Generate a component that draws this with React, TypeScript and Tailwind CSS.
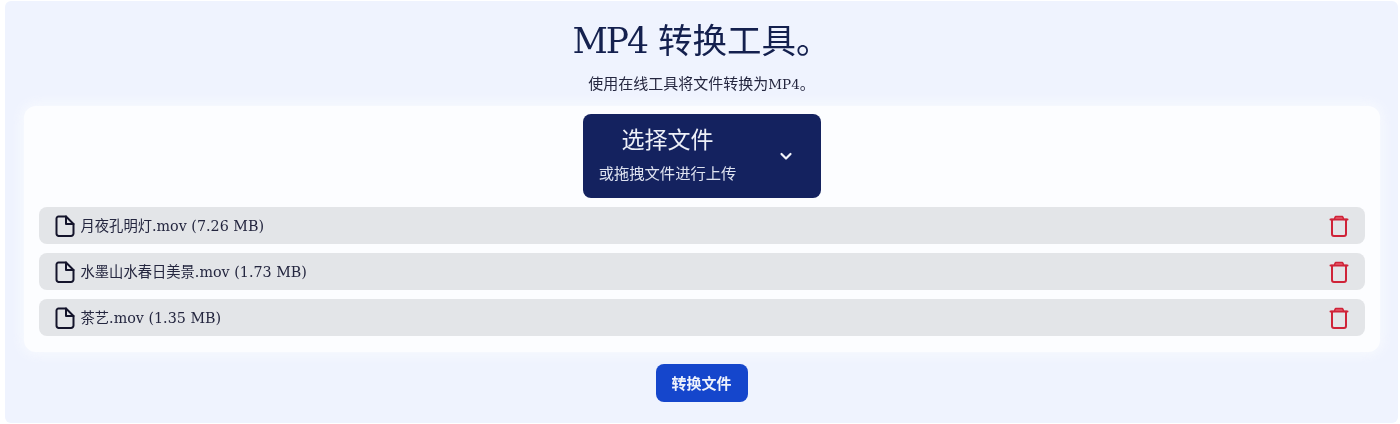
import React from "react";

const files = [
  { name: "月夜孔明灯.mov (7.26 MB)" },
  { name: "水墨山水春日美景.mov (1.73 MB)" },
  { name: "茶艺.mov (1.35 MB)" },
];

function FileIcon() {
  return (
    <svg width="20" height="22" viewBox="0 0 20 22" fill="none" stroke="#14142b" strokeWidth="2" strokeLinejoin="round" strokeLinecap="round" className="shrink-0">
      <path d="M3.5 1.5h7.5l7.5 7.5v9.5a2.5 2.5 0 0 1-2.5 2.5H3.5A2.5 2.5 0 0 1 1.5 18.5V3.5a2 2 0 0 1 2-2Z" />
      <path d="M11 1.5V9h7.5" />
    </svg>
  );
}

function TrashIcon() {
  return (
    <svg width="20" height="22" viewBox="0 0 20 22" fill="none" stroke="#cf2338" strokeWidth="2" strokeLinejoin="round" strokeLinecap="round" className="shrink-0">
      <path d="M5 4.5 6.5 1.6h7L15 4.5" fill="#ee7482" strokeWidth="1.6" />
      <path d="M1.5 4.5h17" />
      <path d="M3 4.5v14.5a2 2 0 0 0 2 2h10a2 2 0 0 0 2-2V4.5" />
    </svg>
  );
}

export default function App() {
  return (
    <div className="h-[424px] w-[1400px] overflow-hidden bg-white pl-[5px] pr-[2px] pt-px blur-[0.5px]">
      <div className="flex h-[422px] flex-col items-center rounded-md bg-[#eff3fe] px-[19px] font-['Noto_Sans_CJK_SC',sans-serif]">
        <h1 className="mt-[16px] h-[48px] text-[34.5px] leading-[48px] text-[#14204e] font-['DejaVu_Serif','Noto_Sans_CJK_SC',serif]">
          <span className="tracking-[-2px]">MP4</span> 转换工具。
        </h1>
        <p className="mt-[8px] h-[20px] text-[15px] leading-[20px] text-[#24263f] font-['Noto_Sans_CJK_SC',sans-serif]">
          使用在线工具将文件转换为<span className="font-['DejaVu_Serif',serif] text-[13.5px]">MP4</span>。
        </p>
        <div className="mt-[13px] flex w-[1356px] flex-col items-center rounded-xl bg-[#fcfdff] px-[15px] pb-[16px] pt-[8px] shadow-[0_0_12px_4px_rgba(252,253,255,0.6)]">
          <button className="flex h-[84px] w-[238px] items-center rounded-lg bg-[#14225f] text-white">
            <span className="flex w-[170px] flex-col items-center pb-[7px]">
              <span className="text-[23px] leading-[30px] text-[#eef0f8]">选择文件</span>
              <span className="mt-[9px] text-[15.3px] leading-[20px] text-[#dfe3f0]">或拖拽文件进行上传</span>
            </span>
            <svg width="14" height="14" viewBox="0 0 14 14" fill="none" stroke="#f2f4fa" strokeWidth="2.2" strokeLinecap="round" strokeLinejoin="round" className="ml-[26px] shrink-0">
              <path d="m2.5 5 4.5 4.5L11.5 5" />
            </svg>
          </button>
          <ul className="mt-[9px] flex w-full flex-col gap-[9px]">
            {files.map((f) => (
              <li key={f.name} className="flex h-[37px] items-center rounded-lg bg-[#e3e5e8] px-[16px]">
                <FileIcon />
                <span className="ml-[6px] flex-1 pt-[2px] text-[14.3px] text-[#24263f] font-['DejaVu_Serif','Noto_Sans_CJK_SC',serif]">
                  {f.name}
                </span>
                <TrashIcon />
              </li>
            ))}
          </ul>
        </div>
        <button className="mt-[12px] h-[38px] w-[92px] rounded-lg bg-[#1546cc] text-[15px] font-bold text-[#eef2fc]">
          转换文件
        </button>
      </div>
    </div>
  );
}
